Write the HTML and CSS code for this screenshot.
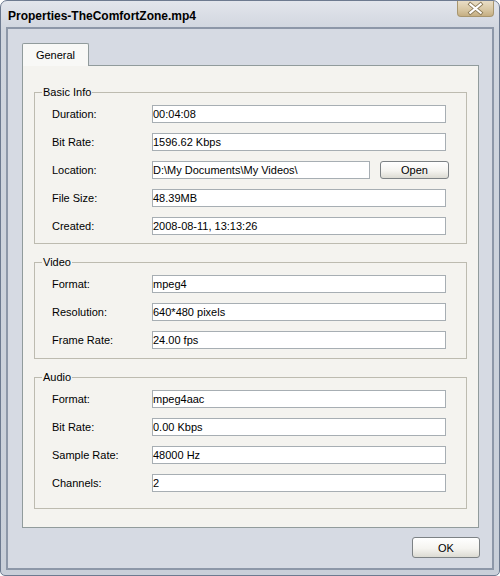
FILE: index.html
```html
<!DOCTYPE html>
<html lang="en">
<head>
    <meta charset="UTF-8">
    <title>Properties-TheComfortZone.mp4</title>
    <link rel="stylesheet" href="styles.css">
</head>
<body>
    <div class="window">
        <div class="titlebar">
            <span class="title">Properties-TheComfortZone.mp4</span>
            <button class="close" aria-label="Close">
                <svg width="37" height="17" viewBox="0 0 37 17">
                    <path d="M13 4 L24 13 M24 4 L13 13" stroke="#8c7b58" stroke-width="4" stroke-linecap="square"/>
                    <path d="M13 4 L24 13 M24 4 L13 13" stroke="#fff" stroke-width="2.2" stroke-linecap="square"/>
                </svg>
            </button>
        </div>

        <div class="client">
            <div class="tabbar">
                <div class="tab">General</div>
            </div>

            <div class="panel">
                <fieldset class="group basic">
                    <legend>Basic Info</legend>
                    <div class="row"><span class="label">Duration:</span><div class="field">00:04:08</div></div>
                    <div class="row"><span class="label">Bit Rate:</span><div class="field">1596.62 Kbps</div></div>
                    <div class="row">
                        <span class="label">Location:</span>
                        <div class="field short">D:\My Documents\My Videos\</div>
                        <button class="btn open">Open</button>
                    </div>
                    <div class="row"><span class="label">File Size:</span><div class="field">48.39MB</div></div>
                    <div class="row"><span class="label">Created:</span><div class="field">2008-08-11, 13:13:26</div></div>
                </fieldset>

                <fieldset class="group video">
                    <legend>Video</legend>
                    <div class="row"><span class="label">Format:</span><div class="field">mpeg4</div></div>
                    <div class="row"><span class="label">Resolution:</span><div class="field">640*480 pixels</div></div>
                    <div class="row"><span class="label">Frame Rate:</span><div class="field">24.00 fps</div></div>
                </fieldset>

                <fieldset class="group audio">
                    <legend>Audio</legend>
                    <div class="row"><span class="label">Format:</span><div class="field">mpeg4aac</div></div>
                    <div class="row"><span class="label">Bit Rate:</span><div class="field">0.00 Kbps</div></div>
                    <div class="row"><span class="label">Sample Rate:</span><div class="field">48000 Hz</div></div>
                    <div class="row"><span class="label">Channels:</span><div class="field">2</div></div>
                </fieldset>
            </div>

            <div class="footer">
                <button class="btn ok">OK</button>
            </div>
        </div>
    </div>
</body>
</html>
```

FILE: styles.css
```css
body {
    margin: 0;
    font-family: "Liberation Sans", Arial, sans-serif;
    font-size: 11px;
    color: #000;
    background: #fff;
}

.window {
    width: 500px;
    height: 576px;
    box-sizing: border-box;
    border: 1px solid #6d7a90;
    border-radius: 7px 7px 5px 5px;
    background: linear-gradient(#e2e5ec, #d0d5de 30px, #c9cfd9);
    display: flex;
    flex-direction: column;
    overflow: hidden;
}

.titlebar {
    height: 26px;
    flex-shrink: 0;
    display: flex;
    justify-content: space-between;
    align-items: flex-start;
    padding: 0 5px 0 7px;
}

.title {
    font-weight: bold;
    font-size: 12px;
    line-height: 14px;
    margin-top: 8px;
}

.close {
    width: 37px;
    height: 17px;
    margin-top: -1px;
    padding: 0;
    border: 1px solid #a8966f;
    border-top: none;
    border-radius: 0 0 4px 4px;
    background: linear-gradient(#ebe0ca, #d8c7a3 60%, #c5ae82);
    display: flex;
}

.client {
    flex: 1;
    margin: 0 5px 5px;
    border: 2px solid #8d97a8;
    background: #d6dae3;
    display: flex;
    flex-direction: column;
}

.tabbar {
    display: flex;
    padding: 14px 0 0 14px;
}

.tab {
    width: 67px;
    height: 23px;
    box-sizing: border-box;
    margin-bottom: -1px;
    border: 1px solid #919b9c;
    border-bottom: none;
    border-radius: 2px 2px 0 0;
    background: #f8f8f6;
    display: flex;
    justify-content: center;
    align-items: center;
    padding-bottom: 1px;
    position: relative;
    z-index: 1;
}

.panel {
    flex: 1;
    margin: 0 13px 0 14px;
    border: 1px solid #919b9c;
    background: #f4f3ef;
    padding: 20px 11px 0;
}

.group {
    margin: 0 0 12px;
    min-inline-size: 0;
    border: 1px solid #bdbbb0;
    padding: 6px 0 8px 17px;
}

/* legend sits inside the fieldset padding, pull it back toward the corner */
.group legend {
    margin-left: -10px;
    padding: 0 1px;
    line-height: 13px;
}

.video {
    padding-bottom: 9px;
}

.audio {
    margin-bottom: 0;
    padding-bottom: 16px;
}

.row {
    display: flex;
    align-items: center;
    height: 18px;
    margin-bottom: 10px;
}

.row:last-child {
    margin-bottom: 0;
}

.label {
    width: 100px;
}

.field {
    width: 294px;
    height: 18px;
    box-sizing: border-box;
    border: 1px solid #a7aeb3;
    background: #fff;
    line-height: 16px;
    white-space: nowrap;
    overflow: hidden;
}

.field.short {
    width: 218px;
}

.btn {
    font: inherit;
    color: #000;
    padding: 0;
    box-sizing: border-box;
    border: 1px solid #7d8285;
    border-radius: 3px;
    background: linear-gradient(#ffffff, #f5f4f0 55%, #dcdbd3);
}

.open {
    width: 69px;
    height: 18px;
    margin-left: 10px;
}

.footer {
    display: flex;
    justify-content: flex-end;
    padding: 9px 12px 10px;
}

.ok {
    width: 68px;
    height: 21px;
}
```
